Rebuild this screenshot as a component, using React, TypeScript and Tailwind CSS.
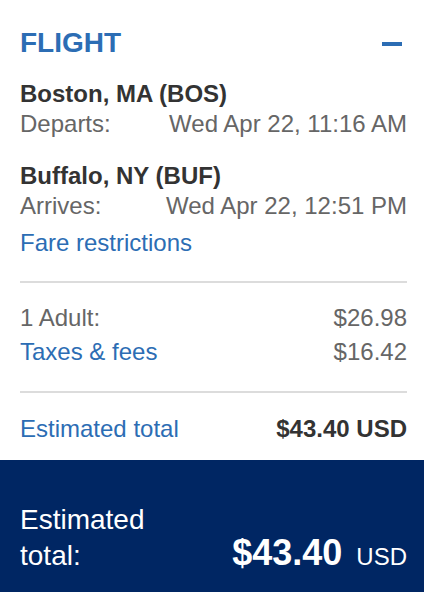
import React from 'react';

const BLUE = 'text-[#2c6db4]';

const Row: React.FC<{ label: React.ReactNode; value: React.ReactNode; className?: string }> = ({ label, value, className }) => (
    <div className={`flex justify-between leading-[30px] ${className ?? ''}`}>
        <span>{label}</span>
        <span>{value}</span>
    </div>
);

export default function App() {
    return (
        <div className="w-[424px] h-[592px] bg-white flex flex-col overflow-hidden font-['Liberation_Sans',Arial,sans-serif] text-[24px]">
            <div className="flex-1 pl-[20px] pr-[17px]">
                {/* Header */}
                <div className="flex items-center justify-between pt-[25px] h-[61px]">
                    <h2 className={`text-[28px] leading-[36px] font-bold ${BLUE}`}>FLIGHT</h2>
                    <button aria-label="Collapse" className="mr-[5px] w-[20px] h-[4px] bg-[#2c6db4] mt-[1px]" />
                </div>

                {/* Itinerary */}
                <div className="mt-[18px]">
                    <div className="font-bold text-[#333] leading-[30px]">Boston, MA (BOS)</div>
                    <Row className="text-[#666]" label="Departs:" value="Wed Apr 22, 11:16 AM" />
                </div>
                <div className="mt-[22px]">
                    <div className="font-bold text-[#333] leading-[30px]">Buffalo, NY (BUF)</div>
                    <Row className="text-[#666]" label="Arrives:" value="Wed Apr 22, 12:51 PM" />
                </div>
                <a className={`block mt-[7px] leading-[30px] ${BLUE}`}>Fare restrictions</a>

                <hr className="mt-[23px] border-0 h-[2px] bg-[#dcdcdc]" />

                {/* Price breakdown */}
                <div className="mt-[20px] flex flex-col gap-[4px] text-[#666]">
                    <Row label="1 Adult:" value="$26.98" />
                    <Row label={<a className={BLUE}>Taxes &amp; fees</a>} value="$16.42" />
                </div>

                <hr className="mt-[24px] border-0 h-[2px] bg-[#dcdcdc]" />

                <Row
                    className="mt-[21px]"
                    label={<a className={BLUE}>Estimated total</a>}
                    value={<span className="font-bold text-[#333]">$43.40 USD</span>}
                />
            </div>

            {/* Footer total */}
            <div className="h-[132px] shrink-0 bg-[#002663] text-white pl-[20px] pr-[17px] pt-[42px]">
                <div className="flex justify-between items-baseline-last">
                    <div className="text-[28px] leading-[36px]">
                        Estimated
                        <br />
                        total:
                    </div>
                    <div className="leading-[36px]">
                        <span className="text-[36px] font-bold">$43.40</span>
                        <span className="ml-[14px] text-[24px]">USD</span>
                    </div>
                </div>
            </div>
        </div>
    );
}
